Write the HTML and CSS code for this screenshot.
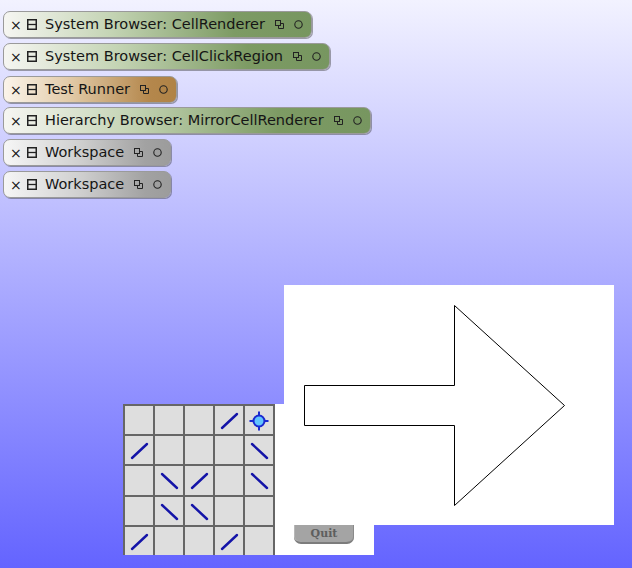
FILE: index.html
```html
<!DOCTYPE html>
<html>
<head>
<meta charset="utf-8">
<link rel="stylesheet" href="styles.css">
</head>
<body>
<div class="world">
  <div class="tabs">
    <div class="tab green">
      <span class="x">×</span>
      <svg class="menu" width="10" height="11" viewBox="0 0 10 11"><rect x="0.75" y="0.75" width="8.5" height="9.5" fill="none" stroke="#222" stroke-width="1.5"/><line x1="1" y1="5.5" x2="9" y2="5.5" stroke="#222" stroke-width="1.3"/></svg>
      <span class="label">System Browser: CellRenderer</span>
      <svg class="col" width="9" height="9" viewBox="0 0 9 9"><rect x="0.5" y="0.5" width="5" height="5" fill="none" stroke="#222"/><path d="M5.5 3.5H8.5V8.5H3.5V5.5" fill="none" stroke="#222"/></svg>
      <svg class="circ" width="9" height="9" viewBox="0 0 9 9"><circle cx="4.5" cy="4.5" r="3.7" fill="none" stroke="#222" stroke-width="1.1"/></svg>
    </div>
    <div class="tab green">
      <span class="x">×</span>
      <svg class="menu" width="10" height="11" viewBox="0 0 10 11"><rect x="0.75" y="0.75" width="8.5" height="9.5" fill="none" stroke="#222" stroke-width="1.5"/><line x1="1" y1="5.5" x2="9" y2="5.5" stroke="#222" stroke-width="1.3"/></svg>
      <span class="label">System Browser: CellClickRegion</span>
      <svg class="col" width="9" height="9" viewBox="0 0 9 9"><rect x="0.5" y="0.5" width="5" height="5" fill="none" stroke="#222"/><path d="M5.5 3.5H8.5V8.5H3.5V5.5" fill="none" stroke="#222"/></svg>
      <svg class="circ" width="9" height="9" viewBox="0 0 9 9"><circle cx="4.5" cy="4.5" r="3.7" fill="none" stroke="#222" stroke-width="1.1"/></svg>
    </div>
    <div class="tab tan">
      <span class="x">×</span>
      <svg class="menu" width="10" height="11" viewBox="0 0 10 11"><rect x="0.75" y="0.75" width="8.5" height="9.5" fill="none" stroke="#222" stroke-width="1.5"/><line x1="1" y1="5.5" x2="9" y2="5.5" stroke="#222" stroke-width="1.3"/></svg>
      <span class="label">Test Runner</span>
      <svg class="col" width="9" height="9" viewBox="0 0 9 9"><rect x="0.5" y="0.5" width="5" height="5" fill="none" stroke="#222"/><path d="M5.5 3.5H8.5V8.5H3.5V5.5" fill="none" stroke="#222"/></svg>
      <svg class="circ" width="9" height="9" viewBox="0 0 9 9"><circle cx="4.5" cy="4.5" r="3.7" fill="none" stroke="#222" stroke-width="1.1"/></svg>
    </div>
    <div class="tab green">
      <span class="x">×</span>
      <svg class="menu" width="10" height="11" viewBox="0 0 10 11"><rect x="0.75" y="0.75" width="8.5" height="9.5" fill="none" stroke="#222" stroke-width="1.5"/><line x1="1" y1="5.5" x2="9" y2="5.5" stroke="#222" stroke-width="1.3"/></svg>
      <span class="label">Hierarchy Browser: MirrorCellRenderer</span>
      <svg class="col" width="9" height="9" viewBox="0 0 9 9"><rect x="0.5" y="0.5" width="5" height="5" fill="none" stroke="#222"/><path d="M5.5 3.5H8.5V8.5H3.5V5.5" fill="none" stroke="#222"/></svg>
      <svg class="circ" width="9" height="9" viewBox="0 0 9 9"><circle cx="4.5" cy="4.5" r="3.7" fill="none" stroke="#222" stroke-width="1.1"/></svg>
    </div>
    <div class="tab gray">
      <span class="x">×</span>
      <svg class="menu" width="10" height="11" viewBox="0 0 10 11"><rect x="0.75" y="0.75" width="8.5" height="9.5" fill="none" stroke="#222" stroke-width="1.5"/><line x1="1" y1="5.5" x2="9" y2="5.5" stroke="#222" stroke-width="1.3"/></svg>
      <span class="label">Workspace</span>
      <svg class="col" width="9" height="9" viewBox="0 0 9 9"><rect x="0.5" y="0.5" width="5" height="5" fill="none" stroke="#222"/><path d="M5.5 3.5H8.5V8.5H3.5V5.5" fill="none" stroke="#222"/></svg>
      <svg class="circ" width="9" height="9" viewBox="0 0 9 9"><circle cx="4.5" cy="4.5" r="3.7" fill="none" stroke="#222" stroke-width="1.1"/></svg>
    </div>
    <div class="tab gray">
      <span class="x">×</span>
      <svg class="menu" width="10" height="11" viewBox="0 0 10 11"><rect x="0.75" y="0.75" width="8.5" height="9.5" fill="none" stroke="#222" stroke-width="1.5"/><line x1="1" y1="5.5" x2="9" y2="5.5" stroke="#222" stroke-width="1.3"/></svg>
      <span class="label">Workspace</span>
      <svg class="col" width="9" height="9" viewBox="0 0 9 9"><rect x="0.5" y="0.5" width="5" height="5" fill="none" stroke="#222"/><path d="M5.5 3.5H8.5V8.5H3.5V5.5" fill="none" stroke="#222"/></svg>
      <svg class="circ" width="9" height="9" viewBox="0 0 9 9"><circle cx="4.5" cy="4.5" r="3.7" fill="none" stroke="#222" stroke-width="1.1"/></svg>
    </div>
  </div>

  <div class="game-window">
    <div class="board">
      <div class="cell"></div>
      <div class="cell"></div>
      <div class="cell"></div>
      <div class="cell"><svg viewBox="0 0 28 28"><line class="mirror" x1="7" y1="22" x2="22" y2="8"/></svg></div>
      <div class="cell"><svg viewBox="0 0 28 28"><line class="tick" x1="4.5" y1="15" x2="23.5" y2="15"/><line class="tick" x1="14" y1="5.5" x2="14" y2="24.5"/><circle class="source" cx="14" cy="15" r="5.5"/></svg></div>

      <div class="cell"><svg viewBox="0 0 28 28"><line class="mirror" x1="7" y1="22" x2="22" y2="8"/></svg></div>
      <div class="cell"></div>
      <div class="cell"></div>
      <div class="cell"></div>
      <div class="cell"><svg viewBox="0 0 28 28"><line class="mirror" x1="7" y1="8" x2="22" y2="22"/></svg></div>

      <div class="cell"></div>
      <div class="cell"><svg viewBox="0 0 28 28"><line class="mirror" x1="7" y1="8" x2="22" y2="22"/></svg></div>
      <div class="cell"><svg viewBox="0 0 28 28"><line class="mirror" x1="7" y1="22" x2="22" y2="8"/></svg></div>
      <div class="cell"></div>
      <div class="cell"><svg viewBox="0 0 28 28"><line class="mirror" x1="7" y1="8" x2="22" y2="22"/></svg></div>

      <div class="cell"></div>
      <div class="cell"><svg viewBox="0 0 28 28"><line class="mirror" x1="7" y1="8" x2="22" y2="22"/></svg></div>
      <div class="cell"><svg viewBox="0 0 28 28"><line class="mirror" x1="7" y1="8" x2="22" y2="22"/></svg></div>
      <div class="cell"></div>
      <div class="cell"></div>

      <div class="cell"><svg viewBox="0 0 28 28"><line class="mirror" x1="7" y1="22" x2="22" y2="8"/></svg></div>
      <div class="cell"></div>
      <div class="cell"></div>
      <div class="cell"><svg viewBox="0 0 28 28"><line class="mirror" x1="7" y1="22" x2="22" y2="8"/></svg></div>
      <div class="cell"></div>
    </div>
    <div class="controls">
      <button class="quit">Quit</button>
    </div>
  </div>

  <div class="arrow-window">
    <svg width="330" height="240" viewBox="0 0 330 240">
      <polygon points="20.5,100.5 170.5,100.5 170.5,20.5 280.5,120.5 170.5,220.5 170.5,140.5 20.5,140.5" fill="#fff" stroke="#000" stroke-width="1"/>
    </svg>
  </div>
</div>
</body>
</html>
```

FILE: styles.css
```css
html, body {
  margin: 0;
  padding: 0;
}

body {
  font-family: "DejaVu Sans", "Liberation Sans", sans-serif;
}

.world {
  position: relative;
  width: 632px;
  height: 568px;
  overflow: hidden;
  background: linear-gradient(to bottom, #f2f2ff 0%, #6464ff 100%);
}

.tabs {
  display: flex;
  flex-direction: column;
  align-items: flex-start;
  gap: 5px;
  padding: 11px 0 0 3px;
}

.tab {
  box-sizing: border-box;
  height: 27px;
  display: flex;
  align-items: center;
  padding: 0 8px 0 6px;
  border: 1px solid #9a9a9a;
  border-radius: 7px;
  box-shadow: 1px 1px 0 rgba(60, 60, 60, 0.45);
  font-size: 14.5px;
  color: #151515;
  white-space: nowrap;
}

.tab.tan {
  margin-top: 1px;
  margin-bottom: -1px;
}

.tab.green {
  background: linear-gradient(to right, #f6f6f2 0%, #c4d4b4 35%, #7d9b64 75%, #779660 100%);
}

.tab.tan {
  background: linear-gradient(to right, #fbf4ea 0%, #e0c8a4 40%, #b4874c 85%, #b08346 100%);
}

.tab.gray {
  background: linear-gradient(to right, #f6f6f6 0%, #d0d0d0 45%, #a2a2a2 85%, #9c9c9c 100%);
}

.x {
  font-size: 14px;
  width: 10px;
  margin-right: 7px;
  line-height: 1;
}

.menu {
  margin-right: 8px;
  display: block;
}

.label {
  margin-right: 10px;
  line-height: 1;
}

.col {
  display: block;
  margin-right: 10px;
}

.circ {
  display: block;
}

.game-window {
  position: absolute;
  left: 123px;
  top: 404px;
  width: 251px;
  height: 151px;
  background: #fff;
  display: flex;
}

.board {
  display: grid;
  grid-template-columns: repeat(5, 28px);
  grid-template-rows: 28px 28px 29px 28px 28px;
  gap: 2px;
  padding: 2px;
  background: #666;
  box-sizing: border-box;
  height: 151px;
}

.cell {
  background: #dedede;
}

.cell svg {
  display: block;
  width: 28px;
  height: 28px;
}

.mirror {
  stroke: #1414a8;
  stroke-width: 2.4;
  stroke-linecap: round;
}

.tick {
  stroke: #1a28d0;
  stroke-width: 2;
}

.source {
  fill: #62c4ff;
  stroke: #1a28d0;
  stroke-width: 2;
}

.controls {
  flex: 1;
  display: flex;
  align-items: flex-end;
  padding: 0 0 11px 19px;
}

.quit {
  width: 60px;
  height: 24px;
  padding: 4px 0 0 0;
  margin: 0;
  border: none;
  border-bottom: 2px solid #7c7c7c;
  border-radius: 0 0 7px 7px;
  background: #a4a4a4;
  box-shadow: inset -1px 0 0 #8a8a8a, inset 1px 0 0 #b8b8b8;
  font-family: "DejaVu Serif", "Liberation Serif", serif;
  font-weight: bold;
  font-size: 11px;
  color: #5e5e5e;
}

.arrow-window {
  position: absolute;
  left: 284px;
  top: 285px;
  width: 330px;
  height: 240px;
  background: #fff;
}

.arrow-window svg {
  display: block;
}
```
